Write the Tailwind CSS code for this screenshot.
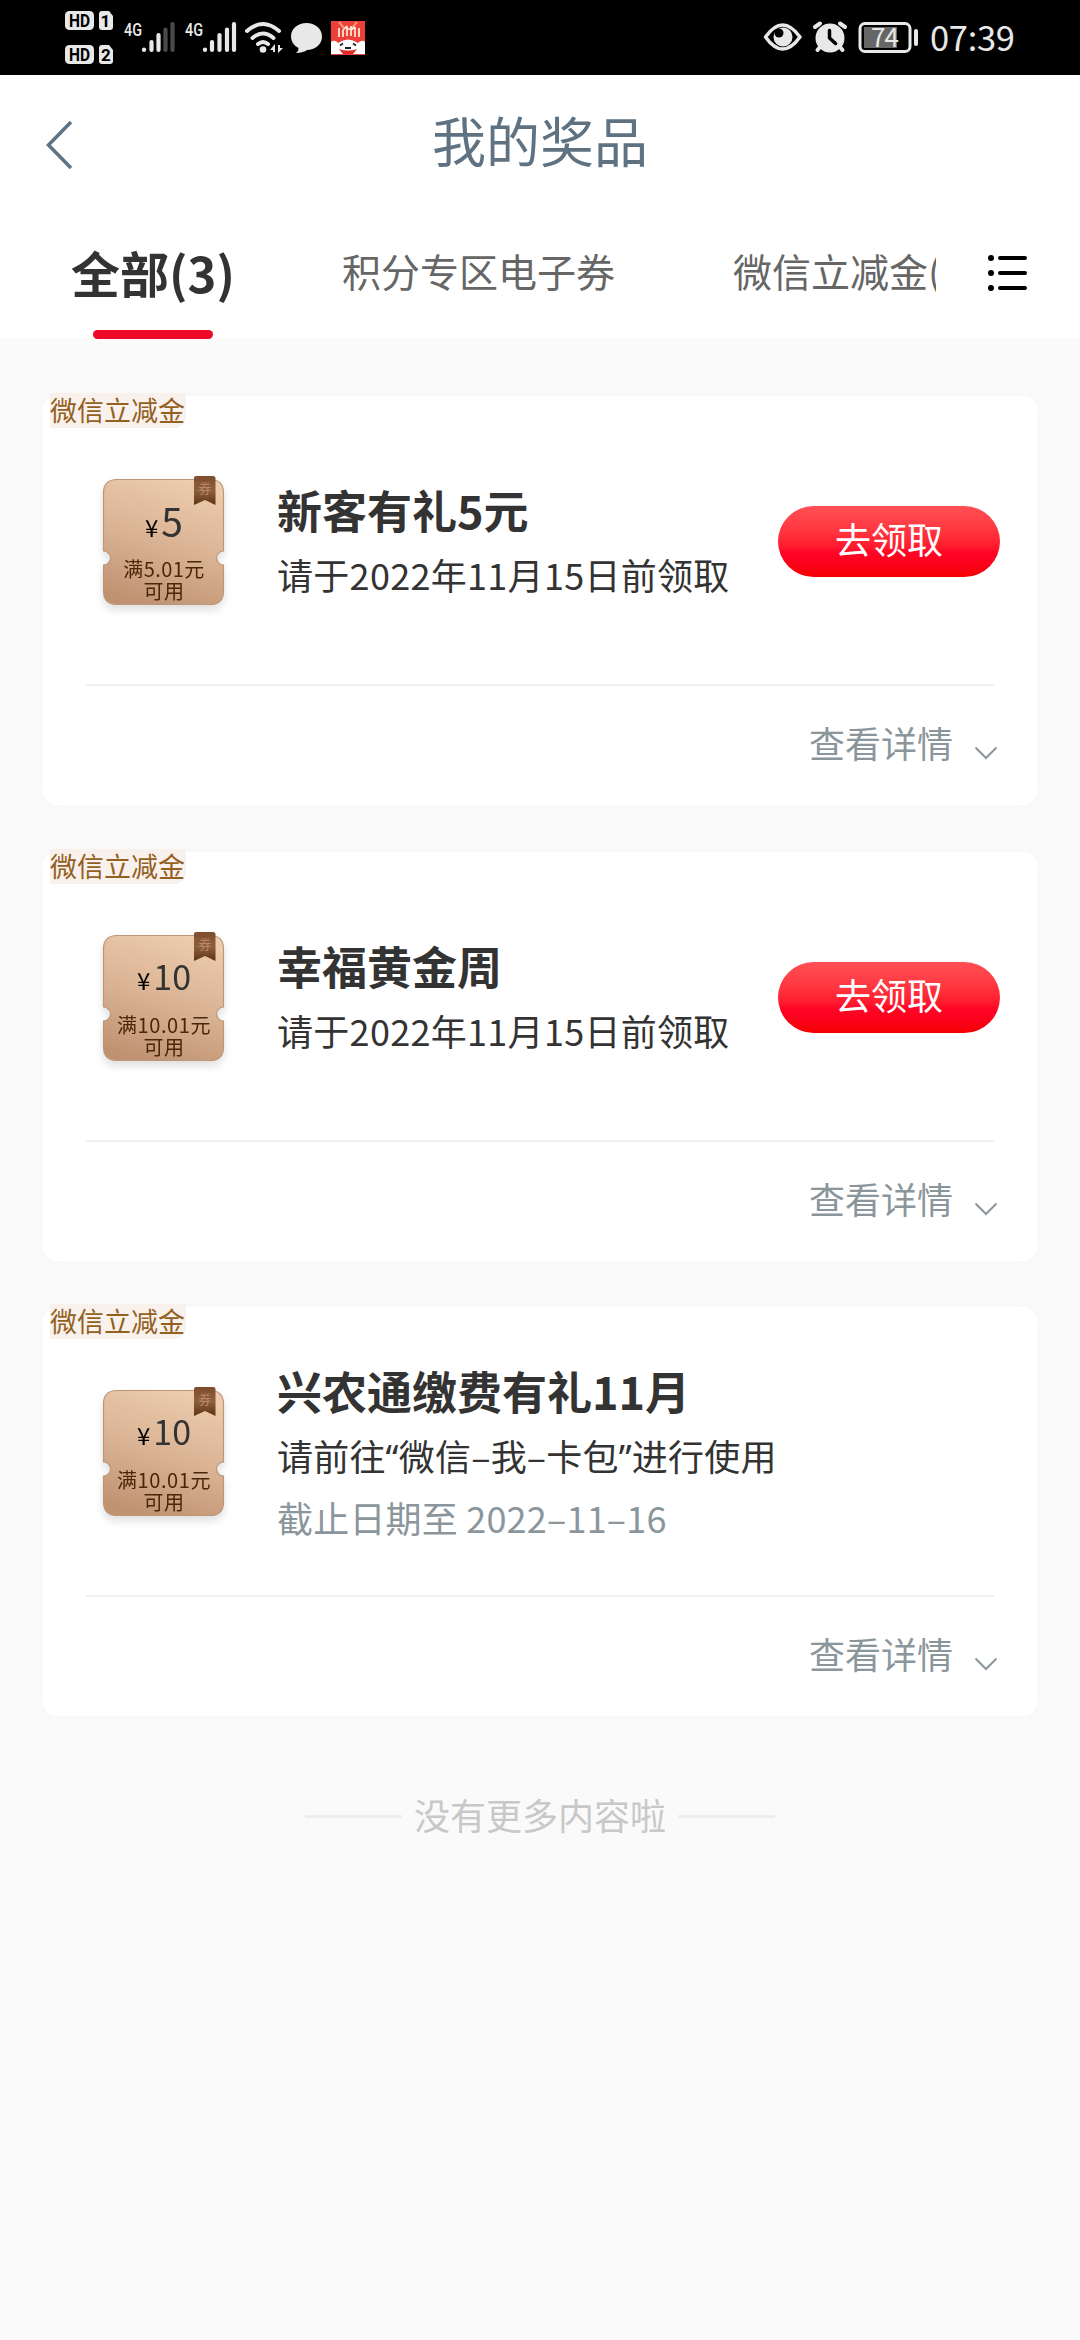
<!DOCTYPE html>
<html lang="zh-CN">
<head>
<meta charset="utf-8">
<title>我的奖品</title>
<script src="https://cdn.jsdelivr.net/npm/@tailwindcss/browser@4"></script>
</head>
<body class="w-[1080px] h-[2340px] overflow-hidden bg-[#fafafa] font-['Noto_Sans_CJK_SC',sans-serif] text-[#333333]">

<svg class="absolute w-0 h-0">
  <defs>
    <linearGradient id="gold" x1="0.65" y1="0" x2="0.35" y2="1">
      <stop offset="0" stop-color="#edcbad"/><stop offset="0.55" stop-color="#d8b192"/><stop offset="1" stop-color="#bf9372"/>
    </linearGradient>
    <linearGradient id="fold" x1="0" y1="0" x2="0" y2="1">
      <stop offset="0" stop-color="#7d4c2b"/><stop offset="0.5" stop-color="#8f6040"/><stop offset="1" stop-color="#5e3313"/>
    </linearGradient>
  </defs>
  <symbol id="ticket" viewBox="0 0 124 130">
    <path d="M15 3.500H108Q121.500 3.500 121.500 17V75A7 7 0 0 0 121.500 89V115Q121.500 128.500 108 128.500H15Q1.500 128.500 1.500 115V89A7 7 0 0 0 1.500 75V17Q1.500 3.500 15 3.500Z" fill="url(#gold)" stroke="#bd9678" stroke-width="1.200"/>
    <path d="M92 2Q92 0 94 0H111Q113.500 0 113.500 2V29L103 24L92 29Z" fill="url(#fold)"/>
  </symbol>
  <symbol id="down" viewBox="0 0 24 14"><path d="M1.500 1.500L12 12L22.500 1.500" fill="none" stroke="#8a969c" stroke-width="2"/></symbol>
</svg>

<!-- status bar -->
<div class="h-[75px] bg-black text-[#e8e8e8] relative">
  <svg class="absolute left-0 top-0" width="1080" height="75" viewBox="0 0 1080 75" fill="#e8e8e8" font-family="Roboto, sans-serif">
    <rect x="65" y="11" width="29" height="19" rx="4.500"/>
    <path d="M102 11H109L113 16V27Q113 30 110 30H102Q99 30 99 27V14Q99 11 102 11Z"/>
    <rect x="65" y="45" width="29" height="19" rx="4.500"/>
    <path d="M102 45H109L113 50V61Q113 64 110 64H102Q99 64 99 61V48Q99 45 102 45Z"/>
    <g fill="#000" font-weight="700" font-size="18" text-anchor="middle">
      <text x="79.500" y="27" textLength="21" lengthAdjust="spacingAndGlyphs">HD</text><text x="105.500" y="27" font-size="17">1</text>
      <text x="79.500" y="61" textLength="21" lengthAdjust="spacingAndGlyphs">HD</text><text x="106" y="61" font-size="17">2</text>
    </g>
    <g font-size="19" font-weight="500">
      <text x="124" y="35.500" textLength="18" lengthAdjust="spacingAndGlyphs">4G</text>
      <text x="185" y="35.500" textLength="18" lengthAdjust="spacingAndGlyphs">4G</text>
    </g>
    <g stroke="#e8e8e8" stroke-width="4.200" stroke-linecap="round">
      <path d="M144 49.500V50M151.500 42V50M158.500 35V50M205 49.500V50M212 42V50M219.500 35V50M227 29.500V50M234 24V50"/>
      <path d="M165.500 29.500V50M172.500 24V50" stroke="#4a4a4a"/>
    </g>
    <g fill="none" stroke="#e8e8e8" stroke-width="4" stroke-linecap="round">
      <path d="M247 31Q263 17 279 31M252.500 38Q263 29 273.500 38M258 44Q263 40 268 44"/>
    </g>
    <circle cx="263" cy="49.500" r="3.300"/>
    <path d="M270 50L275 44V52H273V50ZM278 45V53L283 48H280V45Z"/>
    <path d="M306.500 23C315 23 322 28.500 322 36.500C322 44.500 315 50 307 50Q304 52.500 296 53Q299 50.500 298.500 48Q291 44 291 36.500C291 28.500 298 23 306.500 23Z"/>
    <rect x="331" y="21" width="34" height="34" fill="#ee403a"/>
    <path d="M339 22L344 28M357 22L352 28" stroke="#f79a76" stroke-width="2"/>
    <path d="M339 28V37M343 30V37M347 26V36M343 30L347 26M351 26V36M347 29H351M355 27V37M351 30L355 27M359 28V37" stroke="#fff0d8" stroke-width="1.700" fill="none"/>
    <path d="M331 42Q335 39 338 43Q348 36 358 43Q362 39 365 42V54H331Z" fill="#fff"/>
    <path d="M339 49Q348 52 357 49L353 54H343Z" fill="#e02a25"/>
    <path d="M340 45.500L343 43.500M353 43.500L356 45.500M345 48H351" stroke="#222" stroke-width="1.800"/>

    <path d="M765.500 37Q782.500 13 800 37Q782.500 61 765.500 37Z" fill="none" stroke="#e8e8e8" stroke-width="3.500" stroke-linejoin="round"/>
    <circle cx="783" cy="37" r="9.500"/><circle cx="779" cy="33" r="4.500" fill="#000"/>
    <circle cx="830" cy="38" r="14.500"/>
    <path d="M815 27L820 23.500M845 27L840 23.500M820 47L817.500 50M840 47L842.500 50" stroke="#e8e8e8" stroke-width="4" stroke-linecap="round"/>
    <path d="M829.500 30.500V38L835.500 43.500" fill="none" stroke="#000" stroke-width="3.500" stroke-linecap="round" stroke-linejoin="round"/>
    <rect x="860" y="23.500" width="50" height="28" rx="5" fill="none" stroke="#e8e8e8" stroke-width="3"/>
    <rect x="864" y="27" width="33" height="21" fill="#666"/>
    <rect x="914" y="29" width="4" height="17" rx="2"/>
    <text x="885" y="46.500" font-size="26" text-anchor="middle" font-family="Noto Sans CJK SC" textLength="28">74</text>
    <text x="930" y="51" font-size="34.500" font-family="Noto Sans CJK SC" textLength="85">07:39</text>
  </svg>
</div>

<!-- header -->
<header class="bg-white h-[263px]">
  <div class="h-[130px] grid grid-cols-[140px_1fr_140px] items-center">
    <svg class="ml-[45px] mt-[9px]" width="30" height="50" viewBox="0 0 30 50"><path d="M26 2L3.500 25L26 48" fill="none" stroke="#5d7386" stroke-width="3.500"/></svg>
    <h1 class="text-center text-[54px] leading-[60px] text-[#5f7282]">我的奖品</h1>
  </div>
  <nav class="h-[134px] flex">
    <div class="flex w-[936px] overflow-hidden whitespace-nowrap text-[39px] leading-[131px] text-[#666666]">
      <div class="pl-[71px] w-[342px] shrink-0 relative text-[49px] leading-[133px] font-bold text-[#333333]">全部(3)
        <span class="absolute left-[93px] bottom-0 w-[120px] h-[9px] rounded-full bg-[#ec0a28]"></span>
      </div>
      <div class="w-[391px] shrink-0">积分专区电子券</div>
      <div class="shrink-0">微信立减金(2)</div>
    </div>
    <svg class="ml-[51px] mt-[48px]" width="42" height="40" viewBox="0 0 42 40">
      <g fill="#000"><circle cx="4" cy="5" r="3"/><circle cx="4" cy="20" r="3"/><circle cx="4" cy="35" r="3"/></g>
      <path d="M13 5H38M13 20H38M13 35H38" stroke="#000" stroke-width="4" stroke-linecap="round"/>
    </svg>
  </nav>
</header>

<main class="pt-[58px] px-[43px] flex flex-col gap-[46.5px]">
  <section class="relative h-[409px] bg-white rounded-[14px] shadow-[0_0_12px_rgba(0,0,0,0.025)] px-[43px]">
    <span class="absolute left-[7px] top-[-3px] h-[35px] w-[136px] rounded-br-[12px] bg-[#f8f1ec] text-[27px] leading-[33px] text-[#94601f] whitespace-nowrap">微信立减金</span>
    <div class="h-[290px] flex items-start border-b-2 border-[#f0f0f0]">
      <div class="relative ml-[16px] mt-[80px] w-[124px] h-[130px] shrink-0 text-center drop-shadow-[0_5px_4px_rgba(0,0,0,0.12)]">
        <svg class="absolute inset-0" width="124" height="130"><use href="#ticket"/></svg>
        <span class="absolute left-[93px] top-[5px] w-[20px] text-[13px] leading-[14px] text-[#b98a6a]">券</span>
        <div class="relative pt-[20px] h-[82px] leading-[48px] text-[39px]"><span class="text-[24px] text-black mr-[3px]">¥</span>5</div>
        <div class="relative text-[20px] leading-[22px] tracking-[0.4px] text-[#4a2708]">满5.01元<br>可用</div>
      </div>
      <div class="ml-[51px] pt-[90px] w-[501px] shrink-0">
        <h2 class="text-[45px] leading-[48px] font-bold whitespace-nowrap">新客有礼5元</h2>
        <p class="mt-[19px] text-[36px] leading-[42px] tracking-[0.3px] whitespace-nowrap">请于2022年11月15日前领取</p>
      </div>
      <button class="mt-[110px] h-[71px] w-[222px] shrink-0 rounded-full bg-linear-to-b from-[#ff4f55] via-[#ff0527] via-65% to-[#f50000] text-white text-[36px] leading-[64px] pb-[7px]">去领取</button>
    </div>
    <div class="flex justify-end pt-[35px] pr-[39px] -mr-[43px] text-[36px] leading-[42px] text-[#8a969c]">查看详情
      <svg class="ml-[21px] mt-[25px]" width="24" height="14"><use href="#down"/></svg>
    </div>
  </section>

  <section class="relative h-[409px] bg-white rounded-[14px] shadow-[0_0_12px_rgba(0,0,0,0.025)] px-[43px]">
    <span class="absolute left-[7px] top-[-3px] h-[35px] w-[136px] rounded-br-[12px] bg-[#f8f1ec] text-[27px] leading-[33px] text-[#94601f] whitespace-nowrap">微信立减金</span>
    <div class="h-[290px] flex items-start border-b-2 border-[#f0f0f0]">
      <div class="relative ml-[16px] mt-[80px] w-[124px] h-[130px] shrink-0 text-center drop-shadow-[0_5px_4px_rgba(0,0,0,0.12)]">
        <svg class="absolute inset-0" width="124" height="130"><use href="#ticket"/></svg>
        <span class="absolute left-[93px] top-[5px] w-[20px] text-[13px] leading-[14px] text-[#b98a6a]">券</span>
        <div class="relative pt-[20px] h-[82px] leading-[48px] text-[34px]"><span class="text-[24px] text-black mr-[3px]">¥</span>10</div>
        <div class="relative text-[20px] leading-[22px] tracking-[0.6px] text-[#4a2708]">满10.01元<br>可用</div>
      </div>
      <div class="ml-[51px] pt-[90px] w-[501px] shrink-0">
        <h2 class="text-[45px] leading-[48px] font-bold whitespace-nowrap">幸福黄金周</h2>
        <p class="mt-[19px] text-[36px] leading-[42px] tracking-[0.3px] whitespace-nowrap">请于2022年11月15日前领取</p>
      </div>
      <button class="mt-[110px] h-[71px] w-[222px] shrink-0 rounded-full bg-linear-to-b from-[#ff4f55] via-[#ff0527] via-65% to-[#f50000] text-white text-[36px] leading-[64px] pb-[7px]">去领取</button>
    </div>
    <div class="flex justify-end pt-[35px] pr-[39px] -mr-[43px] text-[36px] leading-[42px] text-[#8a969c]">查看详情
      <svg class="ml-[21px] mt-[25px]" width="24" height="14"><use href="#down"/></svg>
    </div>
  </section>

  <section class="relative h-[409px] bg-white rounded-[14px] shadow-[0_0_12px_rgba(0,0,0,0.025)] px-[43px]">
    <span class="absolute left-[7px] top-[-3px] h-[35px] w-[136px] rounded-br-[12px] bg-[#f8f1ec] text-[27px] leading-[33px] text-[#94601f] whitespace-nowrap">微信立减金</span>
    <div class="h-[290px] flex items-start border-b-2 border-[#f0f0f0]">
      <div class="relative ml-[16px] mt-[80px] w-[124px] h-[130px] shrink-0 text-center drop-shadow-[0_5px_4px_rgba(0,0,0,0.12)]">
        <svg class="absolute inset-0" width="124" height="130"><use href="#ticket"/></svg>
        <span class="absolute left-[93px] top-[5px] w-[20px] text-[13px] leading-[14px] text-[#b98a6a]">券</span>
        <div class="relative pt-[20px] h-[82px] leading-[48px] text-[34px]"><span class="text-[24px] text-black mr-[3px]">¥</span>10</div>
        <div class="relative text-[20px] leading-[22px] tracking-[0.6px] text-[#4a2708]">满10.01元<br>可用</div>
      </div>
      <div class="ml-[51px] pt-[60px]">
        <h2 class="text-[45px] leading-[48px] font-bold whitespace-nowrap">兴农通缴费有礼11月</h2>
        <p class="mt-[19px] text-[36px] leading-[42px] tracking-[0.2px] whitespace-nowrap">请前往<span class="font-['Noto_Sans']">“</span>微信–我–卡包<span class="font-['Noto_Sans']">”</span>进行使用</p>
        <p class="mt-[17px] text-[36px] leading-[42px] tracking-[0.2px] whitespace-nowrap text-[#8a969c]">截止日期至 2022–11–16</p>
      </div>
    </div>
    <div class="flex justify-end pt-[35px] pr-[39px] -mr-[43px] text-[36px] leading-[42px] text-[#8a969c]">查看详情
      <svg class="ml-[21px] mt-[25px]" width="24" height="14"><use href="#down"/></svg>
    </div>
  </section>
</main>

<footer class="mt-[77px] flex items-center justify-center gap-3 text-[36px] leading-[42px] text-[#c8c8c8]">
  <span class="w-[97px] h-[3px] mt-[5px] bg-[#eeeeee]"></span>没有更多内容啦<span class="w-[97px] h-[3px] mt-[5px] bg-[#eeeeee]"></span>
</footer>
</body>
</html>
